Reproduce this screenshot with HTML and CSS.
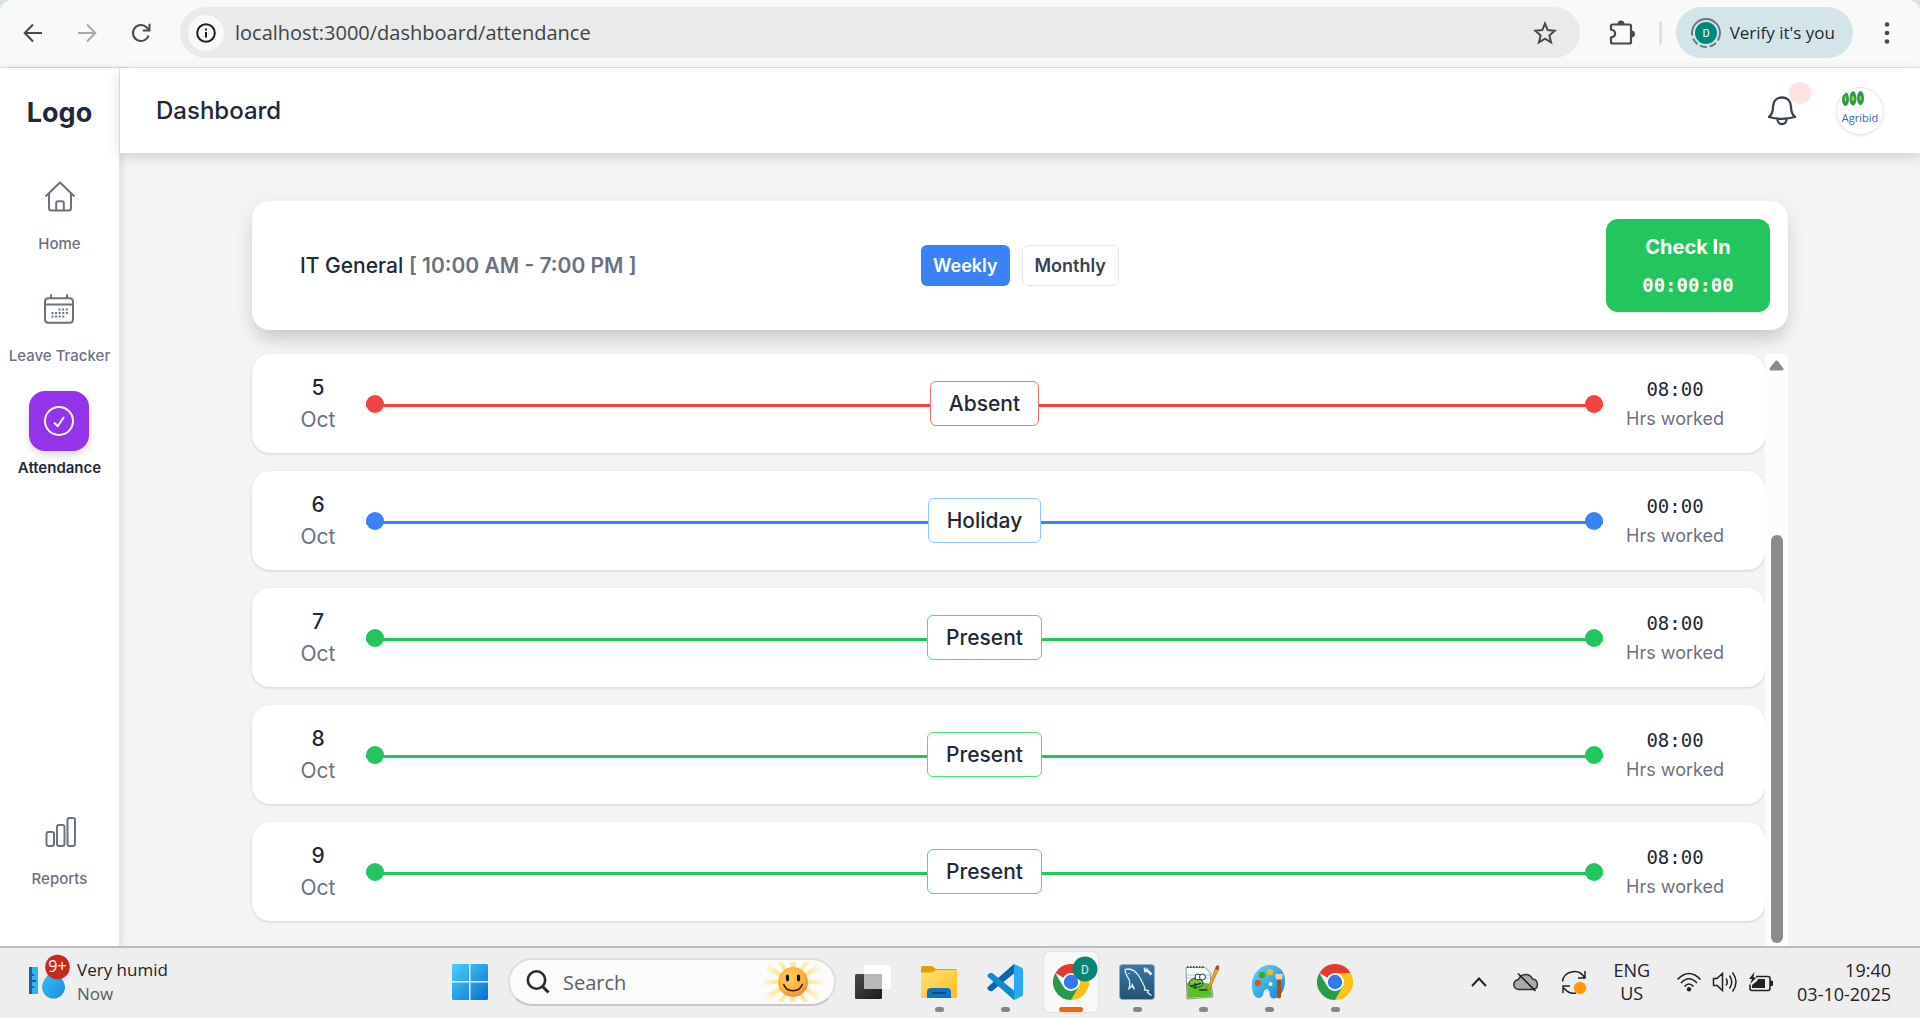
FILE: index.html
```html
<!DOCTYPE html>
<html lang="en">
<head>
<meta charset="utf-8">
<meta name="viewport" content="width=device-width, initial-scale=1">
<title>Dashboard – Attendance</title>
<link rel="stylesheet" href="styles.css">
</head>
<body>
<svg class="defs" width="0" height="0" aria-hidden="true">
  <defs>
    <linearGradient id="win" x1="0" y1="0" x2="1" y2="1"><stop offset="0" stop-color="#4cd0fb"/><stop offset="1" stop-color="#0a6fcf"/></linearGradient>
    <linearGradient id="drop" x1="0" y1="0" x2="1" y2="1"><stop offset="0" stop-color="#37c8f4"/><stop offset="1" stop-color="#1c8be0"/></linearGradient>
    <radialGradient id="sunface" cx=".4" cy=".35" r=".7"><stop offset="0" stop-color="#ffd35a"/><stop offset=".7" stop-color="#fbab3c"/><stop offset="1" stop-color="#e8824a"/></radialGradient>
    <radialGradient id="rays" cx="30" cy="20" r="30" gradientUnits="userSpaceOnUse"><stop offset=".4" stop-color="#ffe27a"/><stop offset="1" stop-color="#ffe27a" stop-opacity=".2"/></radialGradient>
    <linearGradient id="folder" x1="0" y1="0" x2="1" y2="1"><stop offset="0" stop-color="#ffe07a"/><stop offset="1" stop-color="#ffbf1c"/></linearGradient>
    <linearGradient id="dolphin" x1="0" y1="0" x2="0" y2="1"><stop offset="0" stop-color="#3a78a8"/><stop offset="1" stop-color="#235271"/></linearGradient>
    <linearGradient id="palette" x1="0" y1="0" x2="1" y2="1"><stop offset="0" stop-color="#5bdcf8"/><stop offset="1" stop-color="#1a7fd6"/></linearGradient>
    <linearGradient id="pane" x1="0" y1="0" x2="1" y2="1"><stop offset="0" stop-color="#4a4a4a"/><stop offset="1" stop-color="#1c1c1c"/></linearGradient>
    <symbol id="chrome" viewBox="0 0 48 48">
      <path fill="#e33b2e" d="M24 24 3.2 12A24 24 0 0 1 44.8 12H24Z"/>
      <path fill="#fbc116" d="M24 24 34.4 30 24 48A24 24 0 0 0 44.8 12H24Z"/>
      <path fill="#2a9a47" d="M24 24 34.4 30 24 48A24 24 0 0 1 3.2 12L13.6 30Z"/>
      <circle cx="24" cy="24" r="12" fill="#fff"/><circle cx="24" cy="24" r="9.6" fill="#3079ee"/>
    </symbol>
  </defs>
</svg>

<header class="browser">
  <div class="browser-nav">
    <button class="icon-btn" aria-label="Back"><svg width="20" height="20" viewBox="0 0 20 20"><path d="M19 10H2M10 1.5 1.7 10l8.3 8.5" class="nav-line"/></svg></button>
    <button class="icon-btn is-off" aria-label="Forward"><svg width="20" height="20" viewBox="0 0 20 20"><path d="M1 10h17M10 1.5l8.3 8.5-8.3 8.5" class="nav-line"/></svg></button>
    <button class="icon-btn" aria-label="Reload"><svg width="20" height="20" viewBox="0 0 20 20"><path d="M17.6 12.5A8 8 0 1 1 15.8 4.500L18 6.800" class="nav-line"/><path d="M18.500 .8V7.500H11.800" class="nav-line"/></svg></button>
  </div>
  <div class="address">
    <button class="site-info" aria-label="Site information"><svg width="20" height="20" viewBox="0 0 20 20"><circle cx="10" cy="10" r="8.800" fill="none" stroke="#1f2121" stroke-width="2"/><path d="M9 9h2v5.500H9zM9 5.500h2v2H9z" fill="#1f2121"/></svg></button>
    <input class="url" type="text" aria-label="Address" value="localhost:3000/dashboard/attendance">
    <button class="icon-btn" aria-label="Bookmark"><svg width="24" height="24" viewBox="0 0 24 24"><path d="m12 2.500 2.700 6.600 7.100.6-5.400 4.700 1.700 7L12 17.600l-6.100 3.800 1.700-7L2.200 9.700l7.100-.6z" fill="none" stroke="#474b4b" stroke-width="2"/></svg></button>
  </div>
  <button class="icon-btn extensions" aria-label="Extensions"><svg width="26" height="26" viewBox="0 0 26 26"><path d="M3.500 4.500h17q1.500 0 1.500 1.500v16q0 1.500-1.500 1.500H3.500Q2 23.500 2 22v-4.500c5.500-1 5.500-7 0-8V6q0-1.500 1.500-1.500Z" fill="none" stroke="#474b4b" stroke-width="2.200"/><path d="M8.500 4a3.500 3.500 0 0 1 7 0zM22.500 10.500a3.500 3.500 0 0 1 0 7z" fill="#474b4b"/></svg></button>
  <span class="divider"></span>
  <button class="profile">
    <svg width="30" height="30" viewBox="0 0 30 30" aria-hidden="true"><circle cx="15" cy="15" r="14" fill="none" stroke="#66787c" stroke-width="2" stroke-dasharray="8 3 7 3 7 3 7 3 50 0"/><circle cx="15" cy="15" r="11" fill="#00897b"/><text x="15" y="19" text-anchor="middle" font-family="Roboto, sans-serif" font-size="11" fill="#fff">D</text></svg>
    <span>Verify it's you</span>
  </button>
  <button class="icon-btn menu" aria-label="Menu"><svg width="6" height="22" viewBox="0 0 6 22" fill="#474b4b"><circle cx="3" cy="2.500" r="2.300"/><circle cx="3" cy="11" r="2.300"/><circle cx="3" cy="19.500" r="2.300"/></svg></button>
</header>

<div class="app">
  <nav class="sidebar" aria-label="Main">
    <div class="logo">Logo</div>
    <a class="nav-item" href="#home">
      <span class="nav-icon"><svg width="32" height="32" viewBox="0 0 32 32"><path d="M1.500 15.500 16 1.500l14.500 14M5 12.500V27q0 2.500 2.500 2.500h17Q27 29.500 27 27V12.500M12.200 29v-7q0-1.800 1.800-1.800h4q1.800 0 1.800 1.800v7"/></svg></span>
      <span>Home</span>
    </a>
    <a class="nav-item" href="#leave">
      <span class="nav-icon"><svg width="32" height="32" viewBox="0 0 32 32"><path d="M5.500 5.200h21q3.500 0 3.500 3.500v17.500q0 3.500-3.500 3.500h-21Q2 29.700 2 26.200V8.700q0-3.500 3.500-3.500ZM8 5V1.200M24 5V1.200M2 11.500h28"/><path d="M15.500 16.500h9.500M8.500 20h16.500M8.500 23.500h13" stroke-width="2.200" stroke-dasharray="2 1.600"/></svg></span>
      <span>Leave Tracker</span>
    </a>
    <a class="nav-item is-active" href="#attendance" aria-current="page">
      <span class="nav-icon"><svg width="32" height="32" viewBox="0 0 32 32"><circle cx="16" cy="16" r="14"/><path d="m11 17.500 3.700 3.700L21 12"/></svg></span>
      <span>Attendance</span>
    </a>
    <a class="nav-item nav-last" href="#reports">
      <span class="nav-icon"><svg width="32" height="32" viewBox="0 0 32 32"><rect x="2.500" y="16" width="7.500" height="14" rx="2"/><rect x="13" y="9" width="7.500" height="21" rx="2"/><rect x="23.500" y="2" width="7.500" height="28" rx="2"/></svg></span>
      <span>Reports</span>
    </a>
  </nav>

  <div class="page">
    <header class="topbar">
      <h1>Dashboard</h1>
      <div class="topbar-right">
        <button class="bell" aria-label="Notifications"><svg width="28" height="30" viewBox="0 0 28 30"><path d="M14 1.500c5.500 0 9 3.800 9 9 0 6 1.300 8.500 4 10.500-8 2.200-18 2.200-26 0 2.700-2 4-4.500 4-10.500 0-5.200 3.500-9 9-9ZM9.300 22.500c0 7.500 9.400 7.500 9.400 0" fill="none" stroke="#374151" stroke-width="2.300" stroke-linejoin="round"/></svg><span class="bell-dot"></span></button>
        <button class="avatar" aria-label="Agribid account"><svg width="46" height="46" viewBox="0 0 46 46"><g fill="#2c9a4e"><ellipse cx="8.500" cy="11" rx="3.500" ry="7"/><ellipse cx="16" cy="10.500" rx="3.500" ry="7.200"/><ellipse cx="23.500" cy="10" rx="3.500" ry="7"/></g><g fill="#9fce3a"><ellipse cx="8.500" cy="11" rx="1" ry="3"/><ellipse cx="16" cy="10.500" rx="1.500" ry="2.500"/><ellipse cx="23.500" cy="10" rx="1" ry="2.500"/></g><text x="23" y="34" text-anchor="middle" font-family="Open Sans, sans-serif" font-size="11" font-weight="500" fill="#2f68b8">Agribid</text></svg></button>
      </div>
    </header>

    <main class="content">
      <section class="shift-card">
        <h2>IT General <span>[ 10:00 AM - 7:00 PM ]</span></h2>
        <div class="view-switch">
          <button class="view is-on">Weekly</button>
          <button class="view">Monthly</button>
        </div>
        <button class="check-in"><span>Check In</span><span class="timer">00:00:00</span></button>
      </section>

      <div class="log">
        <ul class="days">
          <li class="day absent"><div class="date"><b>5</b><span>Oct</span></div><div class="track"><i></i><span class="tag">Absent</span><i></i></div><div class="hours"><span class="time">08:00</span><span>Hrs worked</span></div></li>
          <li class="day holiday"><div class="date"><b>6</b><span>Oct</span></div><div class="track"><i></i><span class="tag">Holiday</span><i></i></div><div class="hours"><span class="time">00:00</span><span>Hrs worked</span></div></li>
          <li class="day present"><div class="date"><b>7</b><span>Oct</span></div><div class="track"><i></i><span class="tag">Present</span><i></i></div><div class="hours"><span class="time">08:00</span><span>Hrs worked</span></div></li>
          <li class="day present"><div class="date"><b>8</b><span>Oct</span></div><div class="track"><i></i><span class="tag">Present</span><i></i></div><div class="hours"><span class="time">08:00</span><span>Hrs worked</span></div></li>
          <li class="day present"><div class="date"><b>9</b><span>Oct</span></div><div class="track"><i></i><span class="tag">Present</span><i></i></div><div class="hours"><span class="time">08:00</span><span>Hrs worked</span></div></li>
        </ul>
        <div class="scrollbar" aria-hidden="true">
          <svg width="15" height="11" viewBox="0 0 15 11"><path d="M7.500 2 13 9H2Z" fill="#8b8b8b" stroke="#8b8b8b" stroke-width="3" stroke-linejoin="round"/></svg>
          <span class="thumb"></span>
        </div>
      </div>
    </main>
  </div>
</div>

<footer class="taskbar">
  <button class="weather">
    <svg width="42" height="56" viewBox="0 0 42 56" aria-hidden="true"><path d="M0 13h9v27H0z" fill="#2fb4ea"/><path d="M0 13h3v27H0zM3 20h2v2H3zM3 26h4v2H3zM3 32h2v2H3z" fill="#145fa8"/><path d="M24.500 13C21 19 13 26 13 33a11.500 11.500 0 0 0 23 0c0-7-8-14-11.500-20Z" fill="url(#drop)"/><circle cx="28.500" cy="13" r="12.300" fill="#c42b1c"/><text x="28.500" y="18" text-anchor="middle" font-family="Open Sans, sans-serif" font-size="16" fill="#fff">9+</text></svg>
    <span class="weather-text"><span>Very humid</span><small>Now</small></span>
  </button>
  <div class="apps">
    <button class="app-btn start" aria-label="Start"><svg width="36" height="36" viewBox="0 0 36 36"><path d="M1.500 0H17v17H0V1.500Q0 0 1.500 0ZM18.500 0H34.500Q36 0 36 1.500V17H18.500ZM0 18.500H17V36H1.500Q0 36 0 34.500ZM18.500 18.500H36V34.500Q36 36 34.500 36H18.500Z" fill="url(#win)"/></svg></button>
    <label class="search">
      <svg width="24" height="24" viewBox="0 0 24 24" aria-hidden="true"><circle cx="10.500" cy="10" r="8.700" fill="none" stroke="#2b2b2b" stroke-width="2.600"/><path d="m16.500 16.500 6 6" stroke="#2b2b2b" stroke-width="3"/></svg>
      <input type="text" placeholder="Search" aria-label="Search">
      <svg width="60" height="40" viewBox="0 0 60 40" aria-hidden="true"><path d="M0 17v6l30-3zM2 32l4 6 24-18zM2 8 6 2l24 18zM14 0h6l10 20zM27 0h6l-3 20zM41 0h6L30 20zM54 2l4 6-28 12zM60 17v6l-30-3zM58 32l-4 6-24-18zM46 40h-6L30 20zM33 40h-6l3-20zM20 40h-6l16-20z" fill="url(#rays)"/><circle cx="30" cy="20" r="15" fill="url(#sunface)"/><ellipse cx="24.500" cy="16" rx="1.700" ry="3.400" fill="#111"/><ellipse cx="35.500" cy="16" rx="1.700" ry="3.400" fill="#111"/><path d="M20.500 22c3 9 16 9 19 0" fill="none" stroke="#2a1606" stroke-width="1.500"/></svg>
    </label>
    <button class="app-btn view-btn" aria-label="Task view"><svg width="36" height="34" viewBox="0 0 36 34"><rect x="0" y="9" width="27" height="25" rx="1.500" fill="url(#pane)"/><rect x="9" y="0" width="27" height="24" rx="1.500" fill="#fff" opacity=".9"/><path d="M9 9h18v15H9z" fill="#b9b9b9"/></svg></button>
    <button class="app-btn running" aria-label="File Explorer"><svg width="36" height="36" viewBox="0 0 36 36"><path d="M0 3.500Q0 2 1.500 2H11l4 3h20l1 1v10H0z" fill="#e0a106"/><path d="M0 8.500h11L15 6h21v26.500q0 1.500-1.500 1.500h-33Q0 34 0 32.500z" fill="url(#folder)"/><path d="M6 34v-6q0-4 4-4h16q4 0 4 4v6z" fill="#0f70c6"/><path d="M11 29h14" stroke="#0a4a8c" stroke-width="2"/></svg></button>
    <button class="app-btn running" aria-label="Visual Studio Code"><svg width="36" height="36" viewBox="0 0 36 36"><path d="M27 0v9.500L5.500 26.700Q3.500 28 1.500 26-.5 24.500 1 22.800Z" fill="#0a66ad"/><path d="M1 13 27 36v-9.500L5.500 9.300Q3.500 8 1.500 10-.5 11.500 1 13Z" fill="#118bd0"/><path d="m27 0 7.500 3.500Q36 4.200 36 6v24q0 1.800-1.500 2.500L27 36z" fill="#29a9f2"/></svg></button>
    <button class="app-btn running current" aria-label="Google Chrome, profile D"><svg width="46" height="44" viewBox="0 0 46 44"><use href="#chrome" x="1" y="8" width="36" height="36"/><circle cx="33" cy="13" r="12.500" fill="#0a8475"/><text x="33" y="17.500" text-anchor="middle" font-family="Roboto, sans-serif" font-size="12" fill="#d6efec">D</text></svg></button>
    <button class="app-btn running" aria-label="MySQL Workbench"><svg width="36" height="36" viewBox="0 0 36 36"><rect x=".5" y=".5" width="35" height="35" rx="3" fill="url(#dolphin)" stroke="#8fb0c6"/><path d="M6 5.500c5-1.500 10 1 13.500 6 3.500 5 4.500 9 6.500 12l-.5 2.500 4 .5-1 2 4 3M6 5.500c0 5 3.500 8 4.500 11 .5 3 .5 5-.5 8l3-2.500 2 2.500c0-2-2-3-2-5M10 9v1" fill="none" stroke="#e6f0f6" stroke-width="1.300"/><path d="m27 5 5.500 5.500" stroke="#e6f0f6" stroke-width="2.500"/><path d="M25.500 3.500l.5 4 3.500-.500" fill="none" stroke="#e6f0f6" stroke-width="1.800"/></svg></button>
    <button class="app-btn running" aria-label="Notepad++"><svg width="36" height="36" viewBox="0 0 36 36"><path d="M1 3.500h19l5 5L28 33 2 35z" fill="#f7fafb" stroke="#8c9294"/><path d="M1.500 11h23M1.500 14h23" stroke="#9fd0e4"/><path d="M2 19q12-2 24 1l1 12.500L2.500 34z" fill="#5bbf2b"/><path d="M2 3h18" stroke="#555" stroke-width="2" stroke-dasharray="1.500 1.500"/><ellipse cx="11" cy="19" rx="7" ry="4.500" fill="#6fc94a" stroke="#263d1c"/><circle cx="13" cy="13" r="3" fill="#fff" stroke="#333"/><circle cx="17.500" cy="13" r="3" fill="#fff" stroke="#333"/><path d="M5 22q6 0 11-3M10 19v6M14 26h8" stroke="#263d1c" fill="none" stroke-width="1.500"/><path d="m22 27 1-4L31 3l3 1.500L25 24z" fill="#efab2f" stroke="#84591b" stroke-width=".6"/><path d="m30 5 2-4 2.500 1.300L32.500 6z" fill="#b04036"/></svg></button>
    <button class="app-btn running" aria-label="Paint"><svg width="36" height="36" viewBox="0 0 36 36"><path d="M19 1C8 1 1 11 1 21c0 9 3 13 7 13 6 0 3-9 8-9 4 0 1 9 6 9.500 6 .5 12-7.500 12-17.500C34 7 28 1 19 1Z" fill="url(#palette)"/><circle cx="7" cy="19" r="3.200" fill="#e0531c"/><circle cx="11" cy="11" r="3.200" fill="#4aa516"/><circle cx="19" cy="8" r="3.200" fill="#fdb913"/><circle cx="19.500" cy="20" r="2" fill="#fff"/><path d="M26 15h4v18q-2 3-4 0z" fill="#a4530e"/><path d="M24 10h8l-1 5.500h-6z" fill="#efd3ad"/></svg></button>
    <button class="app-btn running" aria-label="Google Chrome"><svg width="36" height="36"><use href="#chrome" width="36" height="36"/></svg></button>
  </div>
  <div class="tray">
    <svg class="chev" width="18" height="12" viewBox="0 0 18 12"><path d="m2 10 7-7.500 7 7.500" fill="none" stroke="#222" stroke-width="2"/></svg>
    <svg class="cloud" width="26" height="20" viewBox="0 0 26 20"><path d="M6 17.500a5 5 0 0 1-.5-10A7.500 7.500 0 0 1 19.500 7 5.300 5.300 0 0 1 20 17.500Z" fill="#aaa" stroke="#333" stroke-width="1.500"/><path d="M5 1.500 22.500 19" stroke="#111" stroke-width="1.500"/></svg>
    <svg class="sync" width="26" height="26" viewBox="0 0 26 26"><path d="M1.500 12.500C2 3 17 -2 23.500 8.500M24 2v7h-7M2 24v-7h7M3 19q5 6.500 12 5" fill="none" stroke="#222" stroke-width="1.500"/><circle cx="19" cy="19" r="6.200" fill="#ff9a0c"/></svg>
    <span class="lang">ENG<br>US</span>
    <span class="status">
      <svg width="26" height="20" viewBox="0 0 26 20"><g fill="none" stroke="#222" stroke-width="1.700"><path d="M1.500 7.500q11.500-12 23 0M5 11q8-8.500 16 0M8.500 14.500q4.500-5 9 0"/></g><circle cx="13" cy="17.300" r="2.200" fill="#222"/></svg>
      <svg width="26" height="22" viewBox="0 0 26 22"><path d="M1.500 7.500H5L10.500 2.500v17L5 14.500H1.500ZM14 7.500q2.500 3.500 0 7M17.500 4.500q4.500 6.500 0 13M20.500 1.500q7 9.500 0 19" fill="none" stroke="#222" stroke-width="1.500"/></svg>
      <svg width="26" height="20" viewBox="0 0 26 20"><path d="M8 4.500h12q2 0 2 2v10q0 2-2 2H4q-2 0-2-2v-4" fill="none" stroke="#222" stroke-width="1.600"/><path d="M22.500 9h2v4.500h-2z" fill="#222" stroke="#222"/><path d="M10 7h7v9H4v-3l5-4z" fill="#222"/><path d="M6.500 0 1 7h3L2 12l6.500-6.500h-3z" fill="#222"/></svg>
    </span>
    <span class="clock">19:40<br>03-10-2025</span>
  </div>
</footer>
</body>
</html>
```
FILE: styles.css
```css
* { box-sizing: border-box; }

html { background: #d4e5ea; }

body {
  margin: 0;
  min-height: 100vh;
  display: flex;
  flex-direction: column;
  font-family: Inter, "Liberation Sans", sans-serif;
  color: #1f2937;
}

button { font: inherit; color: inherit; background: none; border: 0; padding: 0; cursor: pointer; }
input { font: inherit; color: inherit; background: none; border: 0; padding: 0; outline: 0; min-width: 0; }
h1, h2, ul { margin: 0; padding: 0; }
svg { display: block; flex: none; }
.defs { position: absolute; }

/* Browser toolbar */
.browser {
  display: flex;
  align-items: center;
  height: 68px;
  padding: 0 30px 2px 23px;
  background: #f9f9f9;
  border-bottom: 1px solid #dcdfdf;
  border-radius: 12px 12px 0 0;
  font-family: "Open Sans", sans-serif;
}
.nav-line { fill: none; stroke: #474b4b; stroke-width: 2; }
.browser-nav { display: flex; gap: 34px; margin-right: 29px; }
.is-off { opacity: .45; }
.address {
  flex: 1;
  display: flex;
  align-items: center;
  height: 51px;
  padding: 0 23px 0 8px;
  border-radius: 26px;
  background: #e9ebea;
}
.site-info {
  width: 36px;
  height: 36px;
  display: grid;
  place-items: center;
  border-radius: 50%;
  background: #f9f9f9;
  margin-right: 11px;
}
.url { flex: 1; font-size: 20px; color: #3f4343; }
.extensions { margin-left: 29px; }
.divider { width: 3px; height: 24px; margin: 0 14px 0 24px; background: #d4e5ea; border-radius: 2px; }
.profile {
  display: flex;
  align-items: center;
  gap: 9px;
  height: 51px;
  padding: 0 18px 0 15px;
  border-radius: 26px;
  background: #d4e5ea;
  font-size: 17px;
  color: #1d2b2e;
}
.menu { margin-left: 31px; }

/* App shell */
.app { flex: 1; display: flex; background: #f3f4f6; }
.sidebar {
  width: 120px;
  display: flex;
  flex-direction: column;
  align-items: center;
  gap: 26px;
  padding: 25px 0 58px;
  background: #fff;
  border-right: 1px solid #e5e7eb;
  box-shadow: 2px 0 7px rgba(0, 0, 0, .1);
}
.logo { font-size: 27px; line-height: 40px; font-weight: 700; margin-bottom: 8px; }
.nav-item {
  display: flex;
  flex-direction: column;
  align-items: center;
  gap: 8px;
  font-size: 15px;
  line-height: 18px;
  font-weight: 500;
  color: #6b7280;
  text-decoration: none;
  white-space: nowrap;
}
.nav-icon { width: 60px; height: 60px; display: grid; place-items: center; border-radius: 16px; }
.nav-icon svg { fill: none; stroke: currentColor; stroke-width: 2; stroke-linecap: butt; stroke-linejoin: round; }
.is-active { color: #1f2937; font-weight: 600; }
.is-active .nav-icon { color: #fff; background: #9333ea; box-shadow: 0 4px 8px rgba(0, 0, 0, .15); }
.nav-last { margin-top: auto; }

.page { flex: 1; min-width: 0; display: flex; flex-direction: column; }
.topbar {
  height: 85px;
  display: flex;
  align-items: center;
  justify-content: space-between;
  padding: 0 36px;
  background: #fff;
  box-shadow: 0 4px 12px rgba(0, 0, 0, .15);
}
h1 { font-size: 24px; font-weight: 500; }
.topbar-right { display: flex; align-items: center; gap: 40px; }
.bell { position: relative; }
.bell-dot { position: absolute; left: 21px; top: -14px; width: 22px; height: 22px; border-radius: 50%; background: #fee2e2; }
.avatar { width: 48px; height: 48px; border: 1px solid #e5e7eb; border-radius: 50%; overflow: hidden; box-shadow: 0 1px 3px rgba(0, 0, 0, .1); }

.content {
  flex: 1;
  display: flex;
  flex-direction: column;
  gap: 24px;
  width: 100%;
  max-width: 1536px;
  margin: 0 auto;
  padding-top: 48px;
}
.shift-card {
  display: grid;
  grid-template-columns: 1fr auto 1fr;
  align-items: center;
  padding: 18px;
  border-radius: 18px;
  background: #fff;
  box-shadow: 0 12px 18px -4px rgba(0, 0, 0, .14), 0 5px 22px rgba(0, 0, 0, .07);
}
h2 { padding-left: 30px; font-size: 21px; font-weight: 500; }
h2 span { color: #6b7280; font-weight: 600; }
.view-switch { display: flex; gap: 12px; }
.view {
  height: 41px;
  padding: 0 12px;
  border: 1px solid #e5e7eb;
  border-radius: 6px;
  font-size: 18px;
  font-weight: 600;
  color: #374151;
}
.is-on { color: #fff; background: #3b82f6; border: 0; }
.check-in {
  justify-self: end;
  width: 164px;
  height: 93px;
  display: flex;
  flex-direction: column;
  justify-content: center;
  align-items: center;
  gap: 10px;
  border-radius: 12px;
  background: #22c55e;
  color: #fff;
  font-size: 20px;
  line-height: 28px;
  font-weight: 700;
}
.timer, .time { font-family: "DejaVu Sans Mono", monospace; font-size: 19px; }

.log { flex: 1; display: flex; }
.days { flex: 1; display: flex; flex-direction: column; gap: 18px; padding-bottom: 24px; list-style: none; }
.day {
  display: flex;
  align-items: center;
  height: 99px;
  padding: 0 41px 0 48px;
  border-radius: 18px;
  background: #fff;
  box-shadow: 0 1px 3px rgba(0, 0, 0, .14);
}
.absent { --tone: #ef4444; --edge: #f87171; }
.holiday { --tone: #3b82f6; --edge: #93c5fd; }
.present { --tone: #22c55e; --edge: #4ade80; }
.date, .hours { display: flex; flex-direction: column; align-items: center; line-height: 32px; }
.date { width: 36px; margin-right: 30px; font-size: 21px; }
.date b { font-weight: 500; }
.date span, .hours { color: #6b7280; }
.track {
  flex: 1;
  display: flex;
  align-items: center;
  justify-content: space-between;
  background: linear-gradient(var(--tone), var(--tone)) 0 23px / 100% 3px no-repeat;
}
.track i { width: 18px; height: 18px; border-radius: 50%; background: var(--tone); }
.tag {
  height: 45px;
  padding: 0 18px;
  border: 1px solid var(--edge);
  border-radius: 6px;
  background: #fff;
  font-size: 21px;
  line-height: 43px;
  font-weight: 500;
}
.hours { width: 98px; margin-left: 23px; font-size: 18px; line-height: 30px; white-space: nowrap; }
.time { color: #1f2937; }
.scrollbar {
  width: 23px;
  display: flex;
  flex-direction: column;
  align-items: center;
  justify-content: space-between;
  padding: 6px 0 3px;
  background: #fcfcfc;
}
.thumb { width: 12px; height: 70%; border-radius: 6px; background: #8b8b8b; }

/* Desktop taskbar */
.taskbar {
  display: flex;
  align-items: center;
  height: 72px;
  padding: 0 29px 2px;
  border-top: 2px solid #bcbcbc;
  background: #eee;
  font-family: "Open Sans", sans-serif;
  color: #222;
}
.weather { display: flex; align-items: center; gap: 6px; flex: 0 0 423px; text-align: left; }
.weather-text { display: flex; flex-direction: column; font-size: 17px; line-height: 24px; }
.weather-text small { font-size: 17px; color: #5c5c5c; }
.apps { display: flex; align-items: center; gap: 12px; }
.app-btn { position: relative; width: 54px; height: 60px; display: grid; place-items: center; border-radius: 6px; }
.start, .view-btn { width: 36px; }
.view-btn { margin: 0 9px 0 7px; }
.running::after {
  content: "";
  position: absolute;
  left: 23px;
  bottom: 0;
  width: 9px;
  height: 5px;
  border-radius: 3px;
  background: #868686;
}
.current { background: #f8f8f8; box-shadow: 0 0 0 1px #e2e2e2; }
.current::after { left: 15px; width: 24px; background: #f7630c; }
.current svg { margin: -8px 0 0 8px; }
.search {
  display: flex;
  align-items: center;
  width: 328px;
  height: 48px;
  margin-left: 8px;
  padding: 0 11px 0 16px;
  border: 2px solid #dedede;
  border-bottom-color: #c6c6c6;
  border-radius: 24px;
  background: #fbfbfb;
  font-size: 20px;
}
.search input { flex: 1; margin-left: 13px; }
.search input::placeholder { color: #606060; opacity: 1; }
.tray { display: flex; align-items: center; margin-left: auto; }
.cloud { margin-left: 25px; }
.sync { margin-left: 22px; }
.lang { margin-left: 26px; text-align: center; font-size: 18px; line-height: 23px; }
.status { display: flex; align-items: center; gap: 10px; margin: 0 23px 0 26px; }
.clock { text-align: right; font-size: 18px; line-height: 24px; }
```
